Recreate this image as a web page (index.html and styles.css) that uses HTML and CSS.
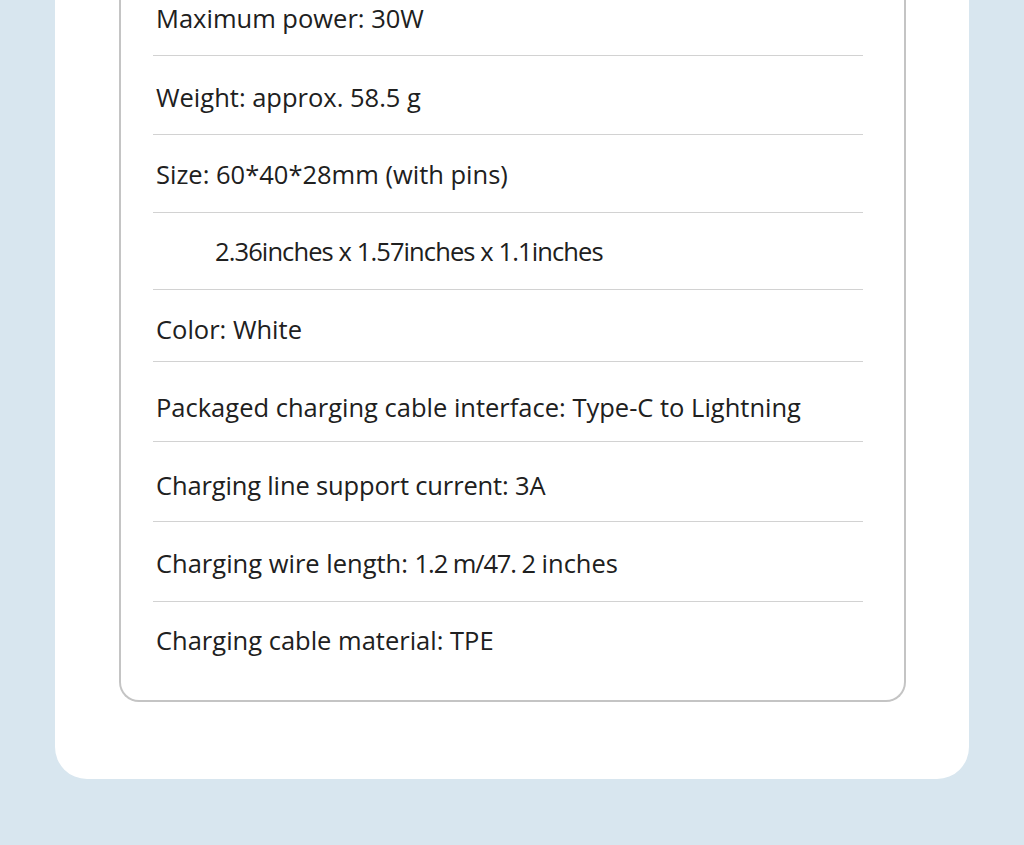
FILE: index.html
```html
<!DOCTYPE html>
<html lang="en">
<head>
<meta charset="utf-8">
<title>Specifications</title>
<link rel="stylesheet" href="styles.css">
</head>
<body>
<div class="page">
  <div class="card">
    <div class="spec-box">
      <div class="row r-first">Maximum power: 30W</div>
      <div class="row r-79">Weight: approx. 58.5 g</div>
      <div class="row r-78">Size: 60*40*28mm (with pins)</div>
      <div class="row r-77 indent tight">2.36inches x 1.57inches x 1.1inches</div>
      <div class="row r-72">Color: White</div>
      <div class="row r-80 low">Packaged charging cable interface: Type-C to Lightning</div>
      <div class="row r-80 mid">Charging line support current: 3A</div>
      <div class="row r-80"><span>Charging wire length: <span class="num">1.2 m/47. 2</span> inches</span></div>
      <div class="row r-last">Charging cable material: TPE</div>
    </div>
  </div>
</div>
</body>
</html>
```

FILE: styles.css
```css
html, body {
  margin: 0;
  padding: 0;
}
body {
  background: #d8e6ef;
  font-family: "Open Sans", "Liberation Sans", sans-serif;
  color: #202020;
  width: 1024px;
  height: 845px;
  overflow: hidden;
}
.page {
  padding-left: 55px;
}
.card {
  width: 914px;
  box-sizing: border-box;
  background: #ffffff;
  border-radius: 0 0 32px 32px;
  padding: 0 63px 77px 64px;
}
.spec-box {
  border: 2px solid #c4c4c4;
  border-top: none;
  border-radius: 0 0 20px 20px;
  padding: 0 41px 0 32px;
}
.row {
  box-sizing: border-box;
  border-bottom: 1px solid #d2d2d2;
  font-size: 25.5px;
  line-height: 30px;
  padding-left: 3px;
  display: flex;
  align-items: flex-start;
  white-space: nowrap;
}
.r-first { height: 56px; padding-top: 3px; }
.r-79 { height: 79px; padding-top: 26px; }
.r-78 { height: 78px; padding-top: 24px; }
.r-77 { height: 77px; padding-top: 23px; }
.r-72 { height: 72px; padding-top: 24px; }
.r-80 { height: 80px; padding-top: 26px; }
.r-80.low { padding-top: 30px; }
.r-80.mid { padding-top: 28px; letter-spacing: -0.15px; }
.r-last { height: 98px; padding-top: 23px; border-bottom: none; }
.indent { padding-left: 62px; }
.tight { letter-spacing: -0.9px; }
.num { letter-spacing: -1.1px; }
```
